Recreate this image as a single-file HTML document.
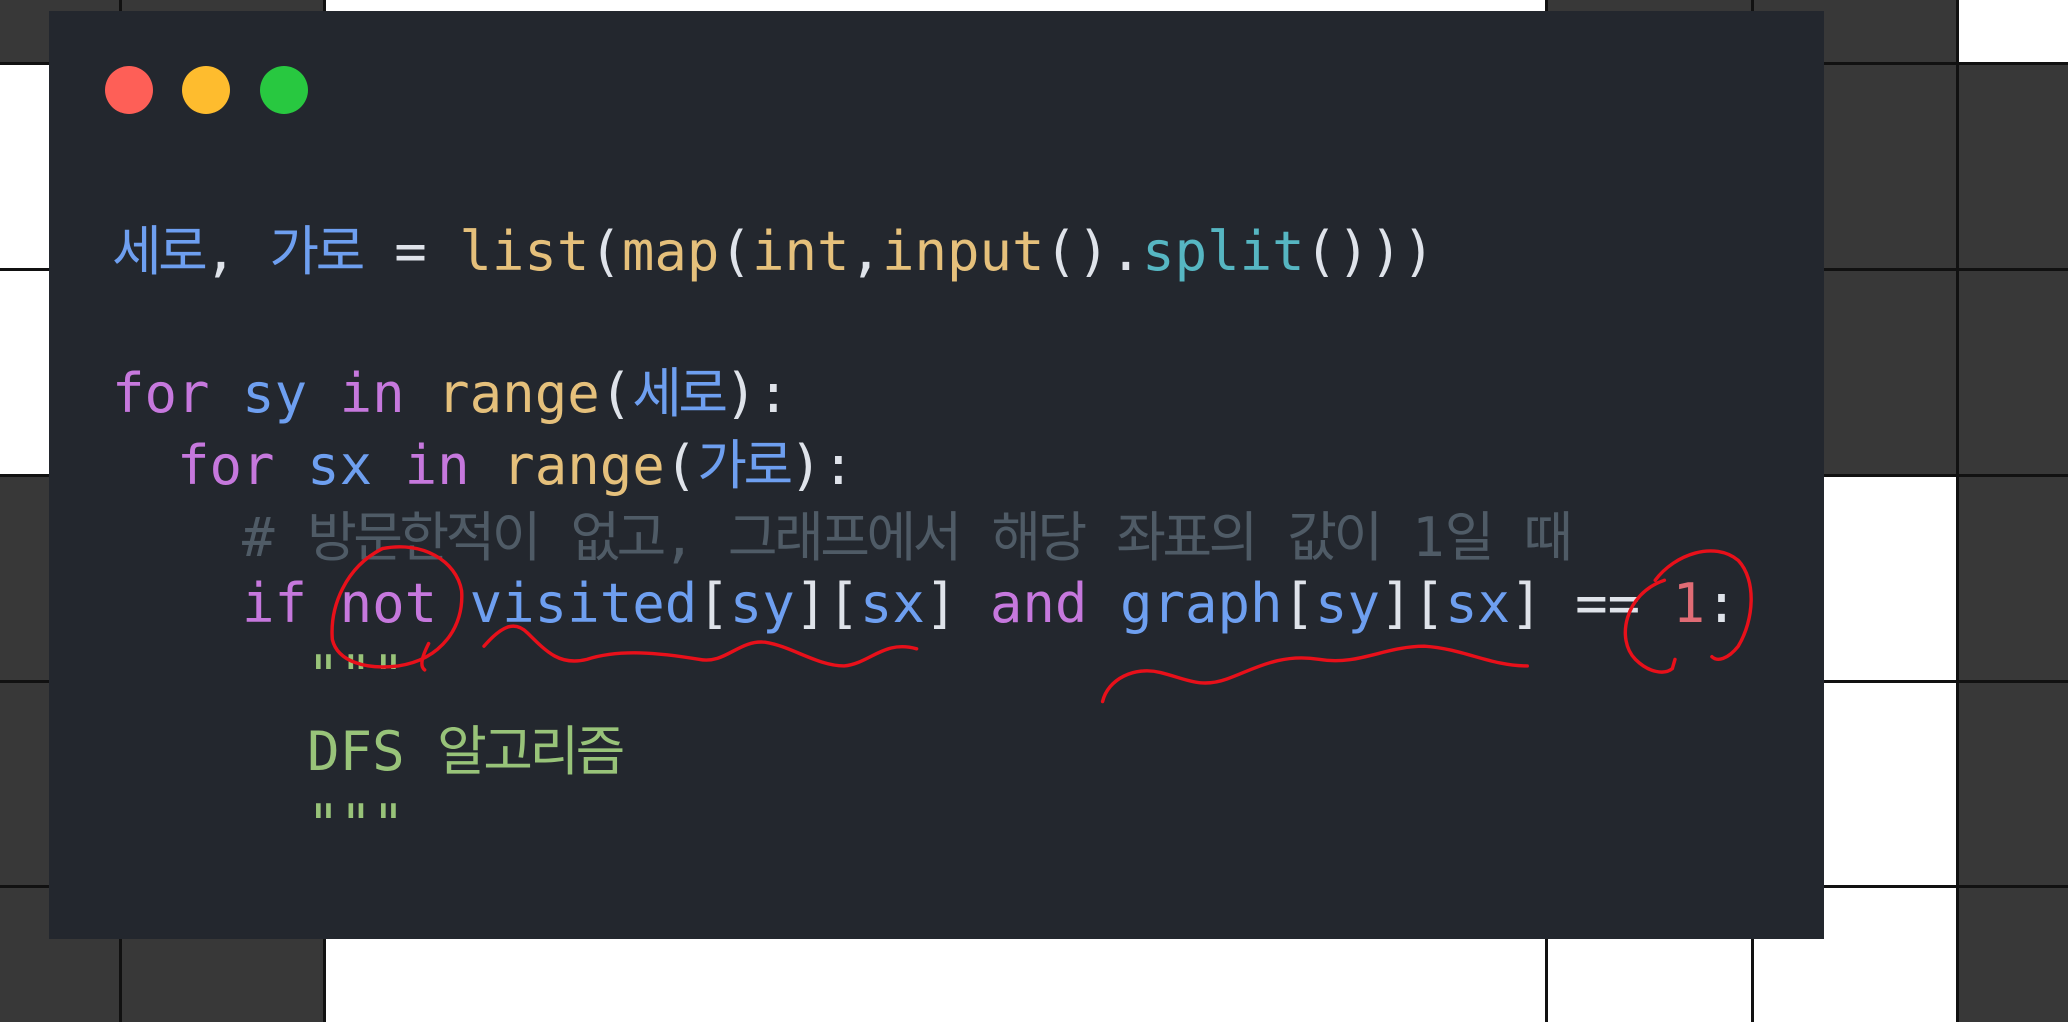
<!DOCTYPE html>
<html><head><meta charset="utf-8"><style>
html,body{margin:0;padding:0;width:2068px;height:1022px;overflow:hidden;background:#fff;position:relative}
.c{position:absolute;background:#383838}
.hl{position:absolute;left:0;width:2068px;height:3px;background:#111}
.vl{position:absolute;top:0;height:1022px;width:3px;background:#111}
.card{position:absolute;left:49px;top:11px;width:1775px;height:928px;background:#23272e}
.dot{position:absolute;top:66px;width:48px;height:48px;border-radius:50%}
.ln{position:absolute;left:112px;font-family:"DejaVu Sans Mono","Liberation Mono","Noto Sans CJK KR",monospace;font-size:54px;line-height:71px;white-space:pre;color:#dfe3ea}
.k{font-family:"Noto Sans CJK KR","NanumGothic",sans-serif;letter-spacing:-3.5px}
.b{color:#6e9ff0}.y{color:#e5c07b}.t{color:#56b6c2}.p{color:#c678dd}.g{color:#4f5b66}.r{color:#e06c75}.s{color:#98c379}
</style></head><body>
<div class="c" style="left:0;top:0;width:324px;height:63px"></div>
<div class="c" style="left:1546px;top:0;width:411px;height:63px"></div>
<div class="c" style="left:1824px;top:63px;width:244px;height:412px"></div>
<div class="c" style="left:0;top:475px;width:49px;height:411px"></div>
<div class="c" style="left:1957px;top:475px;width:111px;height:547px"></div>
<div class="c" style="left:0;top:886px;width:324px;height:136px"></div>
<div class="hl" style="top:62px"></div><div class="hl" style="top:268px"></div><div class="hl" style="top:474px"></div><div class="hl" style="top:680px"></div><div class="hl" style="top:885px"></div>
<div class="vl" style="left:119px"></div><div class="vl" style="left:323px"></div><div class="vl" style="left:1545px"></div><div class="vl" style="left:1751px"></div><div class="vl" style="left:1956px"></div>
<div class="card"></div>
<div class="dot" style="left:105px;background:#fe5f57"></div>
<div class="dot" style="left:182px;background:#febc2e"></div>
<div class="dot" style="left:260px;background:#28c840"></div>
<div class="ln" style="top:211px"><span class="b k">세로</span>, <span class="b k">가로</span> = <span class="y">list</span>(<span class="y">map</span>(<span class="y">int</span>,<span class="y">input</span>().<span class="t">split</span>()))</div>
<div class="ln" style="top:353px"><span class="p">for</span> <span class="b">sy</span> <span class="p">in</span> <span class="y">range</span>(<span class="b k">세로</span>):</div>
<div class="ln" style="top:425px">  <span class="p">for</span> <span class="b">sx</span> <span class="p">in</span> <span class="y">range</span>(<span class="b k">가로</span>):</div>
<div class="ln g" style="top:497px">    # <span class="k">방문한적이</span> <span class="k">없고</span>, <span class="k">그래프에서</span> <span class="k">해당</span> <span class="k">좌표의</span> <span class="k">값이</span> 1<span class="k">일</span> <span class="k">때</span></div>
<div class="ln" style="top:568px">    <span class="p">if</span> <span class="p">not</span> <span class="b">visited</span>[<span class="b">sy</span>][<span class="b">sx</span>] <span class="p">and</span> <span class="b">graph</span>[<span class="b">sy</span>][<span class="b">sx</span>] == <span class="r">1</span>:</div>
<div class="ln s" style="top:640px">      """</div>
<div class="ln s" style="top:711px">      DFS <span class="k">알고리즘</span></div>
<div class="ln s" style="top:789px">      """</div>
<svg style="position:absolute;left:0;top:0" width="2068" height="1022" viewBox="0 0 1568 775" preserveAspectRatio="none" fill="none" stroke="#e8101a" stroke-width="2.6" stroke-linecap="round">
<path d="M290 416 C262 430 250 460 252 485 C256 502 278 508 302 505 C335 500 352 475 350 448 C346 425 320 410 290 416 M325 488 C320 498 318 505 322 508"/>
<path d="M367 490 C380 475 390 470 400 480 C415 495 425 505 445 500 C470 492 500 495 530 500 C550 504 560 485 580 487 C600 490 620 505 640 505 C660 503 670 485 695 492"/>
<path d="M836 532 C840 515 860 505 880 510 C900 515 910 522 930 515 C950 508 970 495 1000 500 C1030 505 1050 490 1080 490 C1110 492 1130 505 1158 505"/>
<path d="M1262 440 C1232 450 1225 485 1240 500 C1250 510 1262 512 1268 507 M1255 440 C1270 420 1300 410 1318 425 C1332 440 1330 470 1318 490 C1310 500 1302 502 1298 498 M1268 507 L1270 500"/>
</svg>
</body></html>
